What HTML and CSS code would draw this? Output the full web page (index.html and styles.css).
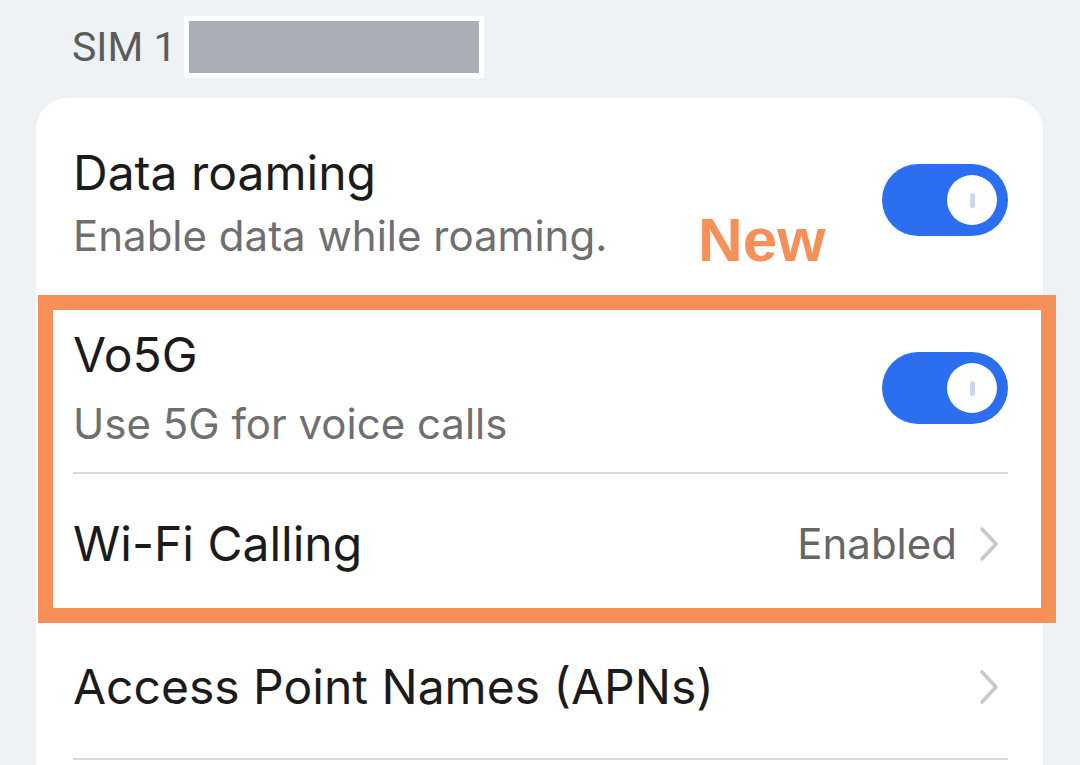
FILE: index.html
```html
<!DOCTYPE html>
<html lang="en">
<head>
<meta charset="utf-8">
<title>SIM 1 settings</title>
<link rel="stylesheet" href="styles.css">
</head>
<body>
<div class="page">
  <header class="sim-header">
    <span class="sim-label">SIM 1</span>
    <span class="sim-redacted"><span class="sim-redacted-fill"></span></span>
  </header>

  <section class="card">
    <div class="row row-roaming">
      <div class="row-text row-text-tight">
        <div class="row-title">Data roaming</div>
        <div class="row-sub">Enable data while roaming.</div>
      </div>
      <div class="toggle"><div class="knob"><span class="knob-mark"></span></div></div>
    </div>
    <div class="divider"></div>
    <div class="row row-vo5g">
      <div class="row-text">
        <div class="row-title">Vo5G</div>
        <div class="row-sub">Use 5G for voice calls</div>
      </div>
      <div class="toggle"><div class="knob"><span class="knob-mark"></span></div></div>
    </div>
    <div class="divider"></div>
    <div class="row row-wifi">
      <div class="row-title">Wi-Fi Calling</div>
      <div class="row-end">
        <span class="row-value">Enabled</span>
        <svg class="chevron" width="20" height="36" viewBox="0 0 20 36"><polyline points="3,3 17,18 3,33" fill="none" stroke="#c8c8c8" stroke-width="3.6" stroke-linecap="round" stroke-linejoin="round"/></svg>
      </div>
    </div>
    <div class="divider"></div>
    <div class="row row-apn">
      <div class="row-title">Access Point Names (APNs)</div>
      <div class="row-end">
        <svg class="chevron" width="20" height="36" viewBox="0 0 20 36"><polyline points="3,3 17,18 3,33" fill="none" stroke="#c8c8c8" stroke-width="3.6" stroke-linecap="round" stroke-linejoin="round"/></svg>
      </div>
    </div>
    <div class="divider"></div>
  </section>

  <div class="annot-new">New</div>
  <div class="annot-box"></div>
</div>
</body>
</html>
```

FILE: styles.css
```css
html, body {
  margin: 0;
  padding: 0;
  background: #eff2f5;
  height: 100%;
  overflow: hidden;
}

.page {
  position: relative;
  width: 1080px;
  height: 765px;
  font-family: Inter, Roboto, "Noto Sans", sans-serif;
}

.sim-header {
  display: flex;
  align-items: center;
  height: 98px;
  padding-left: 72px;
  box-sizing: border-box;
  padding-bottom: 4px;
}

.sim-label {
  font-family: Roboto, sans-serif;
  font-size: 41px;
  line-height: 1;
  color: #5b5b5b;
  margin-right: 7px;
}

.sim-redacted {
  display: flex;
  background: #ffffff;
  padding: 5px;
  width: 300px;
  height: 62px;
  box-sizing: border-box;
}

.sim-redacted-fill {
  flex: 1;
  background: #abaeb4;
}

.card {
  margin-left: 36px;
  width: 1007px;
  background: #ffffff;
  border-radius: 32px 32px 0 0;
  padding: 0 35px 0 37px;
  box-sizing: border-box;
  height: 700px;
}

.row {
  display: flex;
  align-items: center;
  justify-content: space-between;
}

.row-roaming { height: 204px; }
.row-vo5g { height: 168px; }
.row-wifi { height: 140px; }
.row-apn { height: 142px; }

.row-text {
  display: flex;
  flex-direction: column;
  gap: 24px;
}

.row-text-tight {
  gap: 18px;
  margin-top: 6px;
}

.row-title {
  font-size: 48px;
  line-height: 1;
  color: #1b1b1b;
}

.row-sub {
  font-size: 42px;
  line-height: 1;
  color: #6f6f6f;
}

.divider {
  height: 2px;
  background: #d8d8d8;
}

.toggle {
  width: 126px;
  height: 72px;
  border-radius: 36px;
  background: #2b6ff0;
  display: flex;
  align-items: center;
  justify-content: flex-end;
  padding: 0 11px;
  box-sizing: border-box;
}

.knob {
  width: 50px;
  height: 50px;
  border-radius: 50%;
  background: #ffffff;
  display: flex;
  align-items: center;
  justify-content: center;
}

.knob-mark {
  width: 5px;
  height: 15px;
  border-radius: 3px;
  background: #cad6f4;
}

.row-end {
  display: flex;
  align-items: center;
  gap: 22px;
  padding-right: 9px;
}

.row-value {
  font-size: 42px;
  line-height: 1;
  color: #666666;
}

.chevron { display: block; }

.annot-new {
  position: absolute;
  left: 698px;
  top: 209px;
  font-family: "Liberation Sans", Arial, sans-serif;
  font-weight: 700;
  font-size: 62px;
  line-height: 1;
  color: #f68f58;
}

.annot-box {
  position: absolute;
  left: 38px;
  top: 295px;
  width: 1018px;
  height: 328px;
  border: 15px solid #f68f58;
  box-sizing: border-box;
}
```
